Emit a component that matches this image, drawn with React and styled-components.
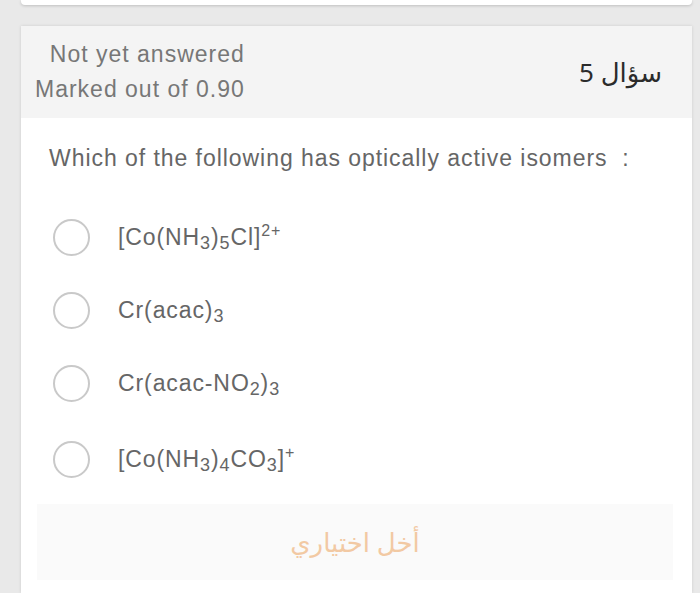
import React from 'react';
import styled, { createGlobalStyle } from 'styled-components';

const GlobalStyle = createGlobalStyle`
  html, body {
    margin: 0;
    padding: 0;
    background: #e9e9e9;
    font-family: "Liberation Sans", Arial, sans-serif;
  }
`;

const Page = styled.div`
  display: flex;
  flex-direction: column;
  gap: 21px;
  padding: 0 8px 0 21px;
  height: 593px;
  overflow: hidden;
`;

const PrevCard = styled.div`
  height: 5px;
  background: #fff;
  border-radius: 0 0 4px 4px;
  box-shadow: 0 1px 3px rgba(0, 0, 0, 0.18);
`;

const Card = styled.div`
  background: #fff;
  flex: 1;
  box-shadow: 0 0 3px rgba(0, 0, 0, 0.12);
`;

const Header = styled.div`
  height: 92px;
  background: #f4f4f4;
  display: flex;
  align-items: center;
  justify-content: space-between;
  padding: 0 30px 0 14px;
`;

const Status = styled.div`
  text-align: right;
  color: #777;
  font-size: 23px;
  letter-spacing: 1px;
  line-height: 35px;
`;

const QNo = styled.div`
  font-family: "Noto Sans", "DejaVu Sans", sans-serif;
  font-size: 26px;
  color: #2b2b2b;
  direction: rtl;
`;

const Body = styled.div`
  padding: 25px 0 0 0;
`;

const Question = styled.div`
  padding-left: 28px;
  color: #666;
  font-size: 23px;
  letter-spacing: 0.95px;
  line-height: 30px;
  margin-bottom: 45px;
`;

const Options = styled.div`
  display: flex;
  flex-direction: column;
  gap: 35px;
  padding-left: 32px;
`;

const Option = styled.label`
  display: flex;
  align-items: center;
  gap: 28px;
  height: 38px;
  margin-top: ${p => (p.$last ? '3px' : '0')};
  color: #666;
  font-size: 23px;
  letter-spacing: 0.9px;
`;

const Radio = styled.span`
  box-sizing: border-box;
  width: 37px;
  height: 37px;
  border-radius: 50%;
  border: 2px solid #c9c9c9;
  background: #fff;
  flex: none;
`;

const Sub = styled.sub`
  font-size: 18px;
  vertical-align: -4px;
  line-height: 0;
`;

const Sup = styled.sup`
  font-size: 16px;
  vertical-align: 9px;
  line-height: 0;
`;

const Clear = styled.div`
  margin: 26px 19px 0 16px;
  height: 76px;
  background: #fafafa;
  display: flex;
  align-items: center;
  justify-content: center;
  font-family: "Noto Sans", "DejaVu Sans", sans-serif;
  font-size: 26px;
  color: #f2c9a3;
  direction: rtl;
`;

export default function App() {
  return (
    <>
      <GlobalStyle />
      <Page>
        <PrevCard />
        <Card>
          <Header>
            <Status>
              <div>Not yet answered</div>
              <div>Marked out of 0.90</div>
            </Status>
            <QNo>سؤال 5</QNo>
          </Header>
          <Body>
            <Question>Which of the following has optically active isomers &nbsp;:</Question>
            <Options>
              <Option>
                <Radio />
                <span>[Co(NH<Sub>3</Sub>)<Sub>5</Sub>Cl]<Sup>2+</Sup></span>
              </Option>
              <Option>
                <Radio />
                <span>Cr(acac)<Sub>3</Sub></span>
              </Option>
              <Option>
                <Radio />
                <span>Cr(acac-NO<Sub>2</Sub>)<Sub>3</Sub></span>
              </Option>
              <Option $last>
                <Radio />
                <span>[Co(NH<Sub>3</Sub>)<Sub>4</Sub>CO<Sub>3</Sub>]<Sup>+</Sup></span>
              </Option>
            </Options>
            <Clear>أخل اختياري</Clear>
          </Body>
        </Card>
      </Page>
    </>
  );
}
